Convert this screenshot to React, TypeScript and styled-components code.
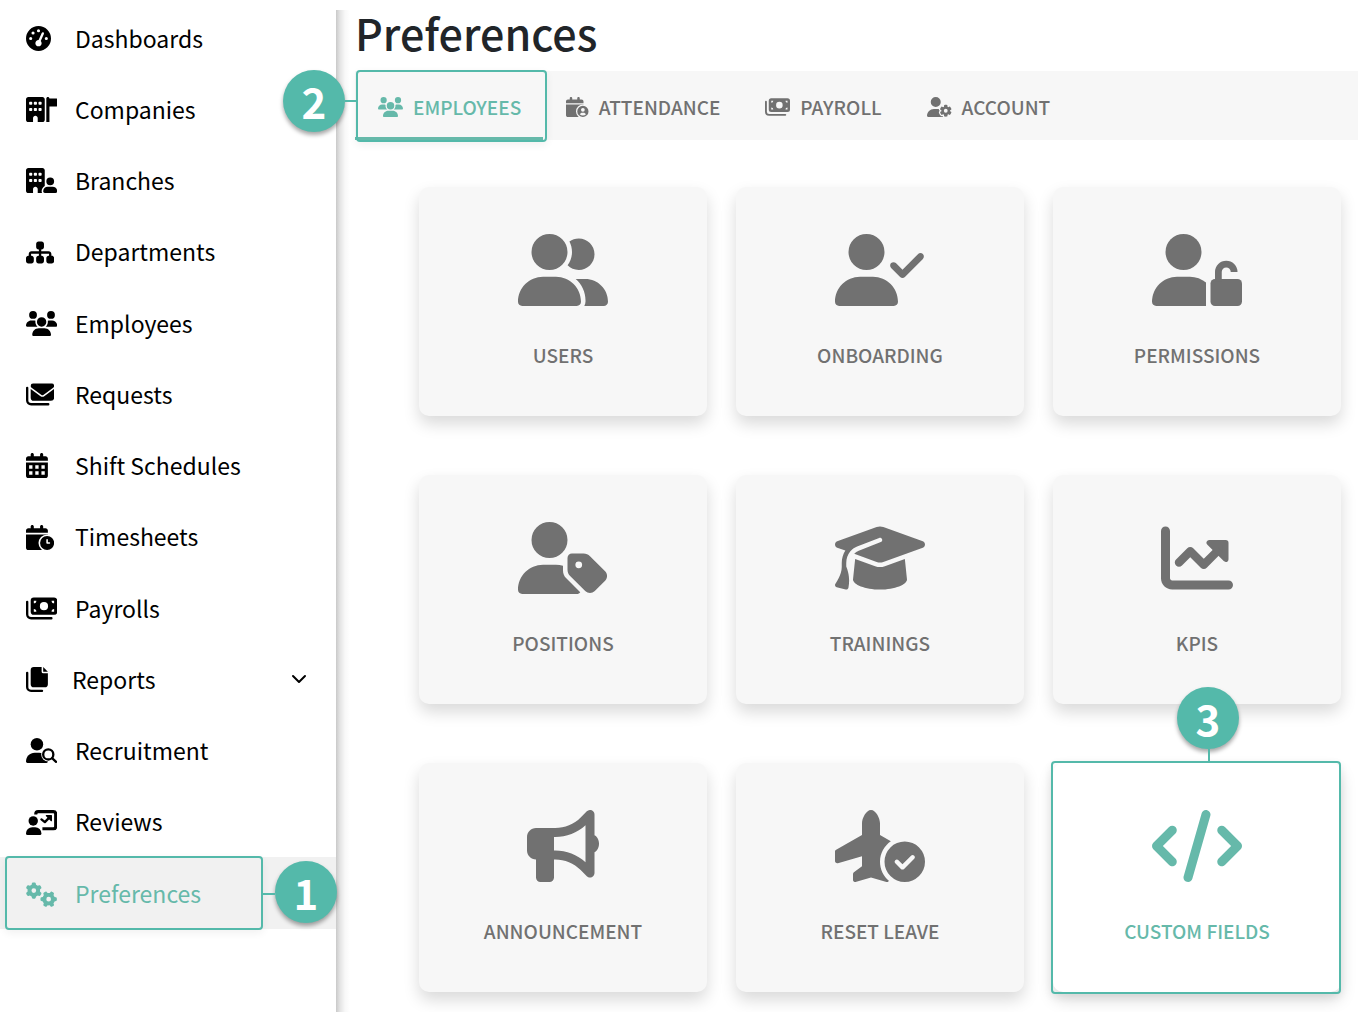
import React, { useId } from 'react';
import styled, { createGlobalStyle, css } from 'styled-components';
import {
  FaBuildingFlag,
  FaBuildingUser,
  FaBullhorn,
  FaCode,
  FaGaugeHigh,
  FaGears,
  FaGraduationCap,
  FaPlaneCircleCheck,
  FaSitemap,
  FaUserCheck,
  FaUserGear,
  FaUserGroup,
  FaUserTag,
  FaUsers,
} from 'react-icons/fa6';

const teal = '#66b9aa';
const marker = '#54b9aa';
const grey = '#717171';
const panel = '#f7f7f7';

const GlobalStyle = createGlobalStyle`
  *, *::before, *::after { box-sizing: border-box; }
  body {
    margin: 0;
    background: #fff;
    font-family: "Noto Sans CJK SC", "Noto Sans", sans-serif;
  }
`;

/* ---------- icons ---------- */

const USER_BODY =
  'M178.3 304C79.8 304 0 383.8 0 482.3C0 498.7 13.3 512 29.7 512H418.3c16.4 0 29.7-13.3 29.7-29.7C448 383.8 368.2 304 269.7 304z';
const CALENDAR_TOP =
  'M128 0c17.7 0 32 14.3 32 32V64H288V32c0-17.7 14.3-32 32-32s32 14.3 32 32V64h48c26.5 0 48 21.5 48 48v48H0V112C0 85.5 21.5 64 48 64H96V32c0-17.7 14.3-32 32-32z';
const CALENDAR_BODY = 'M0 192H448V464c0 26.5-21.5 48-48 48H48c-26.5 0-48-21.5-48-48z';

const Glyph = ({ width, children }: { width: number; children: React.ReactNode }) => (
  <svg viewBox={`0 0 ${width} 512`} height="1em" fill="currentColor" aria-hidden="true">
    {children}
  </svg>
);

const Envelopes = () => (
  <Glyph width={576}>
    <path d="M24 120V376a80 80 0 0 0 80 80H456" fill="none" stroke="currentColor" strokeWidth="48" strokeLinecap="round" />
    <path d="M144 32H528a48 48 0 0 1 48 48c0 15-7 29-19 38L355 265c-11 8-27 8-38 0L115 118C103 109 96 95 96 80a48 48 0 0 1 48-48z" />
    <path d="M96 144V320a64 64 0 0 0 64 64H512a64 64 0 0 0 64-64V144L374 290c-23 17-53 17-76 0z" />
  </Glyph>
);

const CalendarGrid = () => (
  <Glyph width={448}>
    <path d={CALENDAR_TOP} />
    <path
      fillRule="evenodd"
      d={`${CALENDAR_BODY}M64 250V322H132V250zM190 250V322H258V250zM316 250V322H384V250zM64 374V446H132V374zM190 374V446H258V374zM316 374V446H384V374z`}
    />
  </Glyph>
);

const BadgedCalendar = ({ badge }: { badge: string }) => {
  const id = useId();
  return (
    <Glyph width={576}>
      <mask id={id} maskUnits="userSpaceOnUse" x="0" y="0" width="576" height="512">
        <rect width="576" height="512" fill="#fff" />
        <circle cx="432" cy="368" r="176" fill="#000" />
      </mask>
      <path d={CALENDAR_TOP + CALENDAR_BODY} mask={`url(#${id})`} />
      <path fillRule="evenodd" d={`M432 224a144 144 0 1 1 0 288 144 144 0 1 1 0-288z${badge}`} />
    </Glyph>
  );
};

const CalendarClock = () => (
  <BadgedCalendar badge="m16 80c0-8.800-7.200-16-16-16s-16 7.200-16 16v64c0 8.800 7.200 16 16 16h48c8.800 0 16-7.200 16-16s-7.200-16-16-16H448V304z" />
);

const CalendarUser = () => (
  <BadgedCalendar badge="m0 56a48 48 0 1 0 0 96 48 48 0 1 0 0-96zM352 440a112 112 0 0 0 160 0c-14-24-38-40-64-40H416c-26 0-50 16-64 40z" />
);

const MoneyBills = () => (
  <Glyph width={640}>
    <path d="M24 120V376a80 80 0 0 0 80 80H520" fill="none" stroke="currentColor" strokeWidth="48" strokeLinecap="round" />
    <path
      fillRule="evenodd"
      d="M160 32H576a64 64 0 0 1 64 64V320a64 64 0 0 1-64 64H160a64 64 0 0 1-64-64V96a64 64 0 0 1 64-64zM368 124a84 84 0 1 0 0 168 84 84 0 1 0 0-168zM160 96v52a52 52 0 0 0 52-52zM576 96h-52a52 52 0 0 0 52 52zM160 320h52a52 52 0 0 0-52-52zM576 320v-52a52 52 0 0 0-52 52z"
    />
  </Glyph>
);

const Files = () => (
  <Glyph width={448}>
    <path d="M24 120V408a80 80 0 0 0 80 80H328" fill="none" stroke="currentColor" strokeWidth="48" strokeLinecap="round" />
    <path d="M160 0H320V96a32 32 0 0 0 32 32H448V352a64 64 0 0 1-64 64H160a64 64 0 0 1-64-64V64a64 64 0 0 1 64-64z" />
    <path d="M352 0L448 96H352z" />
  </Glyph>
);

const UserSearch = () => {
  const id = useId();
  return (
    <Glyph width={640}>
      <mask id={id} maskUnits="userSpaceOnUse" x="0" y="0" width="640" height="512">
        <rect width="640" height="512" fill="#fff" />
        <circle cx="456" cy="336" r="144" fill="#000" />
        <path d="M456 336L640 520" stroke="#000" strokeWidth="100" />
      </mask>
      <g mask={`url(#${id})`}>
        <circle cx="224" cy="128" r="128" />
        <path d={USER_BODY} />
      </g>
      <g fill="none" stroke="currentColor" strokeWidth="48" strokeLinecap="round">
        <circle cx="456" cy="336" r="104" />
        <path d="M534 414L616 488" />
      </g>
    </Glyph>
  );
};

const PresentationUser = () => (
  <Glyph width={640}>
    <path
      d="M200 92V80a48 48 0 0 1 48-48H560a48 48 0 0 1 48 48V336a48 48 0 0 1-48 48H336"
      fill="none"
      stroke="currentColor"
      strokeWidth="64"
    />
    <circle cx="148" cy="224" r="96" />
    <path d="M128 352H188A128 128 0 0 1 316 480a32 32 0 0 1-32 32H32A32 32 0 0 1 0 480A128 128 0 0 1 128 352z" />
    <path d="M316 192L386 248L490 140" fill="none" stroke="currentColor" strokeWidth="48" strokeLinecap="round" strokeLinejoin="round" />
    <path d="M416 116H520V220z" stroke="currentColor" strokeWidth="24" strokeLinejoin="round" />
  </Glyph>
);

const UserUnlock = () => {
  const id = useId();
  return (
    <Glyph width={640}>
      <clipPath id={id}>
        <rect width="384" height="512" />
      </clipPath>
      <g clipPath={`url(#${id})`}>
        <circle cx="224" cy="128" r="128" />
        <path d={USER_BODY} />
      </g>
      <rect x="416" y="320" width="224" height="192" rx="32" />
      <path d="M472 336V270a56 56 0 0 1 112 0" fill="none" stroke="currentColor" strokeWidth="48" />
    </Glyph>
  );
};

const ChartLineUp = () => (
  <Glyph width={512}>
    <path d="M64 64c0-17.700-14.300-32-32-32S0 46.300 0 64V400c0 44.200 35.800 80 80 80H480c17.700 0 32-14.300 32-32s-14.300-32-32-32H80c-8.800 0-16-7.200-16-16V64z" />
    <path d="M128 288L208 208L304 304L424 184" fill="none" stroke="currentColor" strokeWidth="60" strokeLinecap="round" strokeLinejoin="round" />
    <path d="M344 148H460V264z" stroke="currentColor" strokeWidth="40" strokeLinejoin="round" />
  </Glyph>
);

const Chevron = () => (
  <svg viewBox="0 0 16 16" width="16" height="16" fill="none" stroke="currentColor" strokeWidth="2" strokeLinecap="round" strokeLinejoin="round" aria-hidden="true">
    <path d="M2 5L8 11L14 5" />
  </svg>
);

/* ---------- layout ---------- */

const Page = styled.div`
  display: grid;
  grid-template-columns: 336px 1fr;
  min-height: 100vh;
`;

const Sidebar = styled.nav`
  position: relative;
  z-index: 1;
  padding-top: 2px;
`;

const NavLink = styled.a<{ $active?: boolean }>`
  display: flex;
  align-items: center;
  height: 100%;
  padding: 0 29px 0 26px;
  background: ${(p) => (p.$active ? '#f1f1f1' : 'transparent')};
  color: ${(p) => (p.$active ? teal : '#000')};
  font-size: 23px;
  line-height: 32px;
  text-decoration: none;
`;

const NavItem = styled.li`
  position: relative;
  height: 71px;

  &:nth-child(4n),
  &:last-child {
    height: 72px;
  }
`;

const NavList = styled.ul`
  margin: 0;
  padding: 0;
  list-style: none;
`;

/* Every glyph is drawn 512 units tall; its width follows the view box. */
const Icon = styled.span<{ $size: number }>`
  display: flex;
  font-size: ${(p) => p.$size}px;

  svg {
    flex: none;
    height: 1em;
  }
  svg[viewBox='0 0 640 512'] {
    width: 1.25em;
  }
  svg[viewBox='0 0 576 512'] {
    width: 1.125em;
  }
`;

const NavIcon = styled(Icon)<{ $tight?: boolean }>`
  width: ${(p) => (p.$tight ? 46 : 49)}px;
  padding-top: 2px;
`;

const NavText = styled.span`
  flex: 1;
`;

const Main = styled.main`
  margin-top: 10px;
  padding: 0 0 20px 19px;
  background: linear-gradient(to right, #c9c9c9, #e4e4e4 4px, #f8f8f8 9px, #fff 14px) no-repeat;
`;

const Title = styled.h1`
  margin: 0;
  height: 61px;
  color: #212529;
  font-size: 43px;
  font-weight: 500;
  line-height: 44px;
`;

const Tabs = styled.div`
  display: flex;
  height: 69px;
  background: ${panel};
`;

const Tab = styled.button<{ $active?: boolean }>`
  position: relative;
  display: flex;
  align-items: center;
  gap: 10px;
  padding: 2px 22px 0 23px;
  border: 0;
  background: transparent;
  color: ${(p) => (p.$active ? teal : grey)};
  box-shadow: ${(p) => (p.$active ? `inset 0 -3px ${teal}` : 'none')};
  font: 500 19px/28px "Noto Sans CJK SC", "Noto Sans", sans-serif;
  cursor: pointer;
`;

const Cards = styled.div`
  display: grid;
  grid-template-columns: repeat(3, 1fr);
  gap: 59px 29px;
  padding: 47px 17px 0 64px;
`;

const CardCell = styled.div`
  position: relative;
`;

const Card = styled.a<{ $active?: boolean }>`
  display: flex;
  flex-direction: column;
  align-items: center;
  gap: 35px;
  height: 229px;
  padding-top: 47px;
  border-radius: 10px;
  background: ${(p) => (p.$active ? '#fff' : panel)};
  box-shadow: 0 8px 16px rgba(0, 0, 0, 0.15);
  color: ${(p) => (p.$active ? teal : grey)};
  font-size: 19px;
  font-weight: 500;
  line-height: 28px;
  text-decoration: none;
`;

/* ---------- step markers ---------- */

type Anchor = 'nav' | 'tab' | 'card';

const Outline = styled.span<{ $at: Anchor }>`
  position: absolute;
  border: 2px solid ${marker};
  border-radius: 4px;
  box-shadow: 0 3px 8px rgba(0, 0, 0, 0.06);
  pointer-events: none;
  inset: ${(p) => ({ nav: '-1px 73px -1px 5px', tab: '-1px -4px -2px 1px', card: '-2px 0 -2px -2px' })[p.$at]};
`;

const Step = styled.span<{ $at: Anchor }>`
  position: absolute;
  display: flex;
  align-items: center;
  justify-content: center;
  width: 62px;
  height: 62px;
  border-radius: 50%;
  background: ${marker};
  box-shadow: 0 3px 4px rgba(0, 0, 0, 0.35);
  color: #fff;
  font-size: 42px;
  font-weight: 700;
  line-height: 62px;

  &::after {
    content: '';
    position: absolute;
    background: ${marker};
  }

  ${(p) =>
    p.$at === 'nav' &&
    css`
      top: 4px;
      right: -1px;
      &::after { top: 32px; right: 100%; width: 12px; height: 2px; }
    `}
  ${(p) =>
    p.$at === 'tab' &&
    css`
      top: -1px;
      left: -72px;
      &::after { top: 30px; left: 100%; width: 12px; height: 2px; }
    `}
  ${(p) =>
    p.$at === 'card' &&
    css`
      top: -76px;
      left: calc(50% - 20px);
      &::after { top: 100%; left: 31px; width: 2px; height: 13px; }
    `}
`;

const Marker = ({ at, step }: { at: Anchor; step: number }) => (
  <>
    <Outline $at={at} />
    <Step $at={at}>{step}</Step>
  </>
);

/* ---------- content ---------- */

type Entry = { label: string; icon: React.ReactNode; active?: boolean; expandable?: boolean };

const navigation: Entry[] = [
  { label: 'Dashboards', icon: <FaGaugeHigh /> },
  { label: 'Companies', icon: <FaBuildingFlag /> },
  { label: 'Branches', icon: <FaBuildingUser /> },
  { label: 'Departments', icon: <FaSitemap /> },
  { label: 'Employees', icon: <FaUsers /> },
  { label: 'Requests', icon: <Envelopes /> },
  { label: 'Shift Schedules', icon: <CalendarGrid /> },
  { label: 'Timesheets', icon: <CalendarClock /> },
  { label: 'Payrolls', icon: <MoneyBills /> },
  { label: 'Reports', icon: <Files />, expandable: true },
  { label: 'Recruitment', icon: <UserSearch /> },
  { label: 'Reviews', icon: <PresentationUser /> },
  { label: 'Preferences', icon: <FaGears />, active: true },
];

const tabs: Entry[] = [
  { label: 'EMPLOYEES', icon: <FaUsers />, active: true },
  { label: 'ATTENDANCE', icon: <CalendarUser /> },
  { label: 'PAYROLL', icon: <MoneyBills /> },
  { label: 'ACCOUNT', icon: <FaUserGear /> },
];

const cards: Entry[] = [
  { label: 'USERS', icon: <FaUserGroup /> },
  { label: 'ONBOARDING', icon: <FaUserCheck /> },
  { label: 'PERMISSIONS', icon: <UserUnlock /> },
  { label: 'POSITIONS', icon: <FaUserTag /> },
  { label: 'TRAININGS', icon: <FaGraduationCap /> },
  { label: 'KPIS', icon: <ChartLineUp /> },
  { label: 'ANNOUNCEMENT', icon: <FaBullhorn /> },
  { label: 'RESET LEAVE', icon: <FaPlaneCircleCheck /> },
  { label: 'CUSTOM FIELDS', icon: <FaCode />, active: true },
];

export default function App() {
  return (
    <>
      <GlobalStyle />
      <Page>
        <Sidebar aria-label="Main">
          <NavList>
            {navigation.map((item) => (
              <NavItem key={item.label}>
                <NavLink href="#" $active={item.active}>
                  <NavIcon $size={25} $tight={item.expandable}>{item.icon}</NavIcon>
                  <NavText>{item.label}</NavText>
                  {item.expandable && <Chevron />}
                </NavLink>
                {item.active && <Marker at="nav" step={1} />}
              </NavItem>
            ))}
          </NavList>
        </Sidebar>
        <Main>
          <Title>Preferences</Title>
          <Tabs role="tablist">
            {tabs.map((tab) => (
              <Tab key={tab.label} type="button" role="tab" aria-selected={!!tab.active} $active={tab.active}>
                <Icon $size={20}>{tab.icon}</Icon>
                {tab.label}
                {tab.active && <Marker at="tab" step={2} />}
              </Tab>
            ))}
          </Tabs>
          <Cards>
            {cards.map((card) => (
              <CardCell key={card.label}>
                <Card href="#" $active={card.active}>
                  <Icon $size={72}>{card.icon}</Icon>
                  {card.label}
                </Card>
                {card.active && <Marker at="card" step={3} />}
              </CardCell>
            ))}
          </Cards>
        </Main>
      </Page>
    </>
  );
}
